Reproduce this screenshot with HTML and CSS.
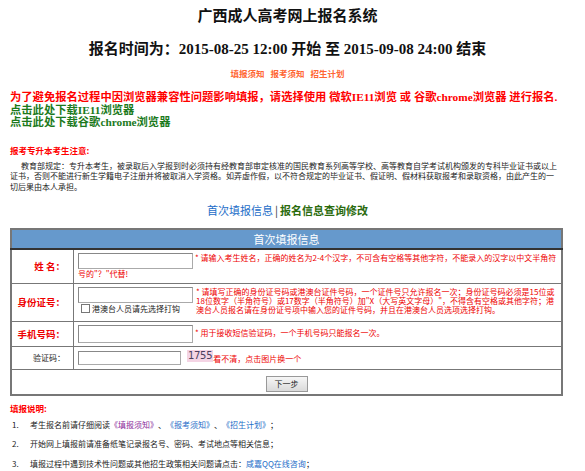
FILE: index.html
```html
<!DOCTYPE html>
<html lang="zh-CN">
<head>
<meta charset="utf-8">
<title>广西成人高考网上报名系统</title>
<link rel="stylesheet" href="styles.css">
</head>
<body>
<div class="page">
  <h1 class="title">广西成人高考网上报名系统</h1>
  <h2 class="time">报名时间为：2015-08-25 12:00 开始 至 2015-09-08 24:00 结束</h2>
  <div class="toplinks"><a>填报须知</a><a>报考须知</a><a>招生计划</a></div>
  <div class="browser">
    <p class="warn">为了避免报名过程中因浏览器兼容性问题影响填报，请选择使用 微软IE11浏览 或 谷歌chrome浏览器 进行报名.</p>
    <p class="dl">点击此处下载IE11浏览器</p>
    <p class="dl">点击此处下载谷歌chrome浏览器</p>
  </div>
  <p class="notice-title">报考专升本考生注意:</p>
  <p class="notice">教育部规定：专升本考生，被录取后入学报到时必须持有经教育部审定核准的国民教育系列高等学校、高等教育自学考试机构颁发的专科毕业证书或以上证书，否则不能进行新生学籍电子注册并将被取消入学资格。如弄虚作假，以不符合规定的毕业证书、假证明、假材料获取报考和录取资格，由此产生的一切后果由本人承担。</p>
  <div class="nav"><a class="nav-blue">首次填报信息</a><span class="sep">|</span><a class="nav-green">报名信息查询修改</a></div>
  <table class="form">
    <tr class="rh"><th colspan="2" class="head">首次填报信息</th></tr>
    <tr class="r1">
      <td class="lbl big">姓&nbsp;名：</td>
      <td class="fld"><span class="box"></span><span class="hint">* 请输入考生姓名，正确的姓名为2-4个汉字，不可含有空格等其他字符，不能录入的汉字以中文半角符号的"？"代替!</span></td>
    </tr>
    <tr class="r2">
      <td class="lbl big">身份证号：</td>
      <td class="fld">
        <div class="idrow">
          <div class="idleft"><span class="box"></span><label class="chk"><span class="cb"></span>港澳台人员请先选择打钩</label></div>
          <span class="hint">* 请填写正确的身份证号码或港澳台证件号码，一个证件号只允许报名一次；身份证号码必须是15位或18位数字（半角符号）或17数字（半角符号）加"X（大写英文字母）"，不得含有空格或其他字符；港澳台人员报名请在身份证号项中输入您的证件号码，并且在港澳台人员选项选择打钩。</span>
        </div>
      </td>
    </tr>
    <tr class="r3">
      <td class="lbl big">手机号码：</td>
      <td class="fld"><span class="box"></span><span class="hint">* 用于接收短信验证码，一个手机号码只能报名一次。</span></td>
    </tr>
    <tr class="r4">
      <td class="lbl small">验证码：</td>
      <td class="fld"><div class="caprow"><span class="box box-s"></span><span class="cap">1755</span><span class="hint">看不清，点击图片换一个</span></div></td>
    </tr>
    <tr class="r5"><td colspan="2" class="btncell"><span class="btn">下一步</span></td></tr>
  </table>
  <p class="expl-title">填报说明:</p>
  <ol class="expl">
    <li><span class="num">1.</span>考生报名前请仔细阅读<a class="purple">《填报须知》</a>、<a class="blue">《报考须知》</a>、<a class="blue">《招生计划》</a>；</li>
    <li><span class="num">2.</span>开始网上填报前请准备纸笔记录报名号、密码、考试地点等相关信息；</li>
    <li><span class="num">3.</span>填报过程中遇到技术性问题或其他招生政策相关问题请点击：<a class="blue">咸嘉QQ在线咨询</a>；</li>
  </ol>
</div>
</body>
</html>
```
FILE: styles.css
```css
html, body { margin: 0; padding: 0; background: #fff; }
body { font-family: "Noto Sans CJK SC", "DejaVu Sans", sans-serif; color: #222; }
.page { width: 555px; margin-left: 10px; }
p { margin: 0; }
a { text-decoration: none; cursor: pointer; }

.title { margin: 0; padding-top: 7px; text-align: center; font-family: "Liberation Serif", "Noto Sans CJK SC", serif; font-size: 15px; line-height: 18px; font-weight: bold; color: #111; }
.time { margin: 15px 0 0; text-align: center; font-family: "Liberation Serif", "Noto Sans CJK SC", serif; font-size: 15px; line-height: 18px; font-weight: bold; color: #111; }
.toplinks { margin-top: 9px; text-align: center; font-size: 8.5px; line-height: 12px; font-weight: bold; }
.toplinks a { color: #ff6633; margin: 0 3px; }

.browser { margin-top: 12px; font-family: "Liberation Serif", "Noto Sans CJK SC", serif; font-size: 11.3px; line-height: 12.5px; font-weight: bold; }
.warn { color: #ff0000; white-space: nowrap; }
.dl { color: #1c7a1c; }

.notice-title { margin-top: 15px; font-size: 8.5px; line-height: 12px; font-weight: bold; color: #ff0000; }
.notice { margin-top: 5px; padding-right: 7px; font-size: 8px; line-height: 10.5px; text-indent: 11px; color: #222; }

.nav { margin-top: 11px; text-align: center; font-size: 11px; line-height: 14px; }
.nav-blue { color: #1c6dc8; }
.nav-green { color: #2b6b0e; font-weight: bold; }
.sep { margin: 0 2px; color: #333; }

.form { margin-top: 11px; width: 553px; border-collapse: collapse; border: 2px solid #777; }
.form td, .form th { border: 1px solid #777; padding: 0; }
.rh { height: 20px; }
.head { background: #6699cc; color: #fff; font-weight: normal; font-size: 11px; line-height: 18px; text-align: center; border-bottom: 2px solid #333 !important; }
.lbl { width: 53px; text-align: right; padding-right: 8px !important; color: #ee0000; vertical-align: middle; }
.lbl.big { font-size: 9.5px; font-weight: bold; }
.lbl.small { font-size: 8px; color: #222; }
.fld { padding: 3px 1px 3px 4px !important; font-size: 8px; line-height: 9px; vertical-align: top; }
.r1 { height: 34px; }
.r2 { height: 38px; }
.r3 { height: 25px; }
.r4 { height: 23px; }
.r5 { height: 24px; }
.box { display: inline-block; width: 113px; height: 14px; border: 1px solid #aaa; border-top-color: #888; border-left-color: #888; vertical-align: top; background: #fff; }
.hint { color: #ee0000; }
.r1 .fld { line-height: 10px; }
.r1 .hint { margin-left: 2px; }
.idrow { display: flex; gap: 3px; }
.idleft { display: flex; flex-direction: column; flex: none; }
.chk { display: flex; align-items: center; gap: 2px; margin-top: 1px; padding-left: 3px; color: #222; font-size: 8px; line-height: 10px; }
.cb { width: 7px; height: 7px; border: 1px solid #777; display: inline-block; background: #fff; }
.r2 .hint { padding-right: 3px; }
.r3 .fld { vertical-align: middle; padding-top: 1px !important; padding-bottom: 1px !important; }
.r3 .box { vertical-align: middle; height: 16px; }
.r3 .hint { margin-left: 2px; }
.r4 .fld { vertical-align: middle; padding-top: 1px !important; padding-bottom: 1px !important; }
.caprow { display: flex; align-items: center; }
.box-s { width: 101px; height: 12px; }
.cap { background: #f4d4e4; color: #4b3f5e; font-family: "DejaVu Sans", sans-serif; font-size: 10px; line-height: 12px; padding: 0 1px; margin: 0 0 4px 6px; letter-spacing: -0.3px; }
.r4 .hint { margin-top: 2px; }
.btncell { text-align: center; vertical-align: middle; }
.btn { display: inline-block; width: 40px; height: 14px; border: 1px solid #999; background: linear-gradient(#f6f6f6, #dadada); font-size: 8px; line-height: 14px; color: #222; vertical-align: middle; }

.expl-title { margin-top: 6px; font-size: 8.5px; line-height: 12px; font-weight: bold; color: #ff0000; }
.expl { list-style: none; margin: 1px 0 0; padding: 0; font-size: 8px; line-height: 19.5px; color: #222; }
.expl li { display: flex; }
.num { width: 18px; padding-left: 2px; flex: none; }
.purple { color: #8a2a9a; }
.blue { color: #1c6dc8; }
```
